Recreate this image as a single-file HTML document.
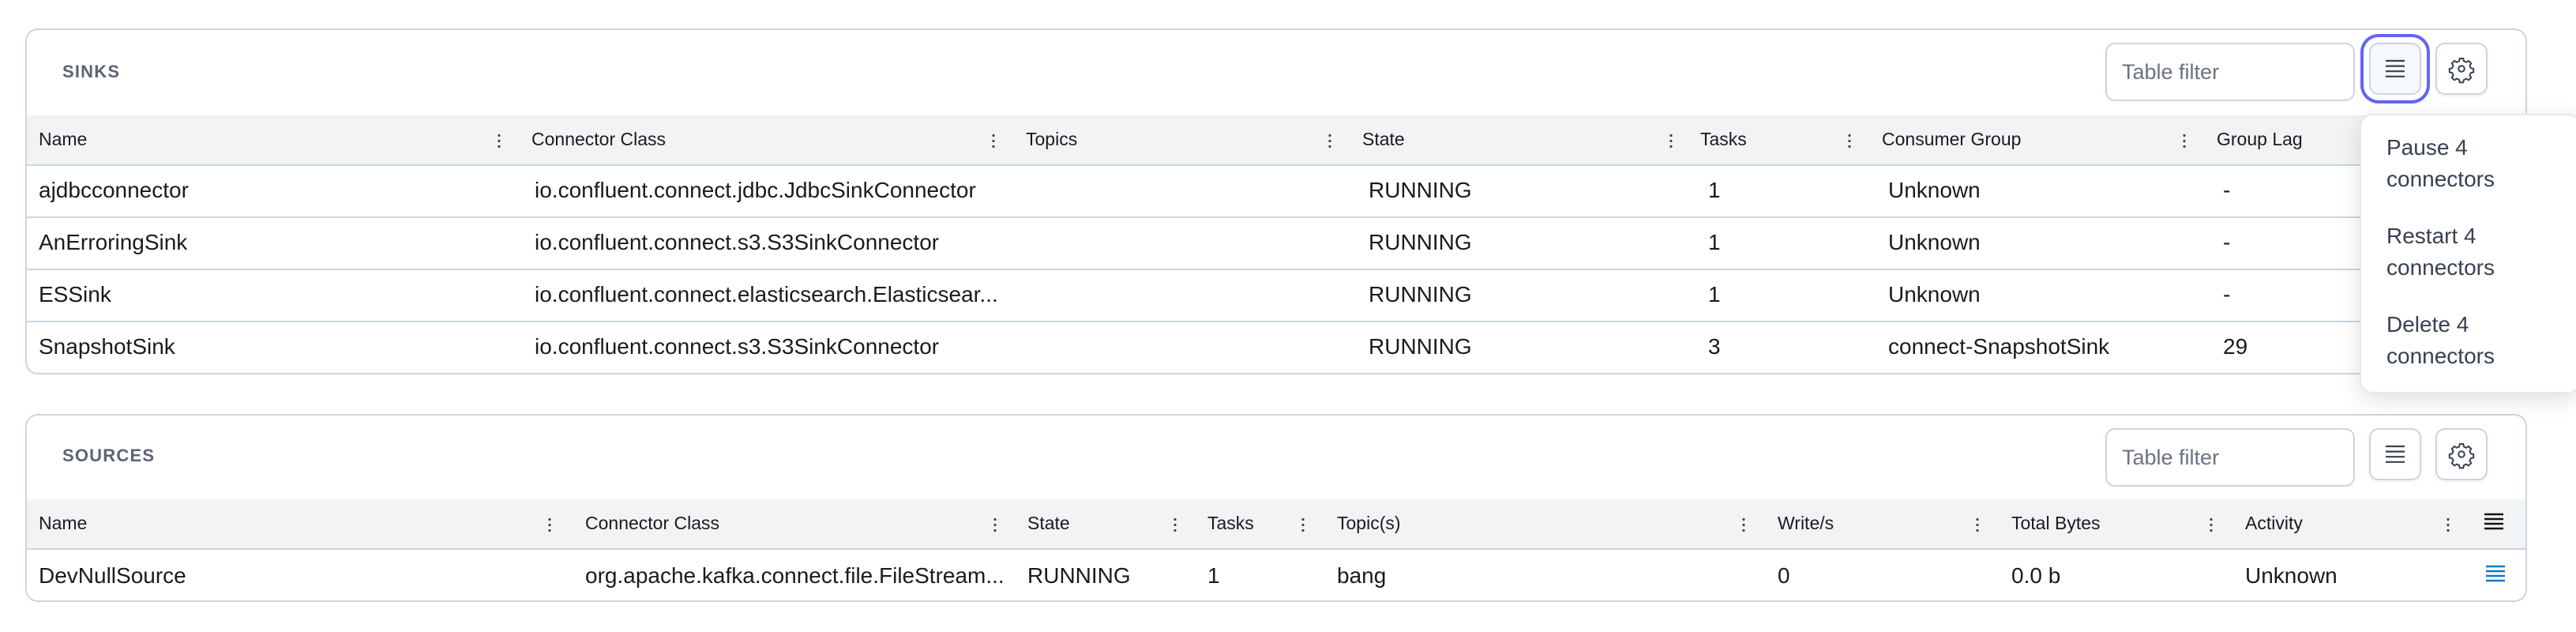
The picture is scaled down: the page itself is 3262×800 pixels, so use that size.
<!DOCTYPE html>
<html><head><meta charset="utf-8"><style>
*{box-sizing:border-box;margin:0;padding:0}
html,body{width:3262px;height:800px;overflow:hidden;background:#fff}
#w{position:absolute;left:0;top:0;width:1631px;height:400px;transform:scale(2);transform-origin:0 0;font-family:"Liberation Sans",sans-serif;color:#1b1b1f}
.p{position:absolute;left:15.5px;width:1584px;border:1px solid #cbd5e1;border-radius:8px;background:#fff}
.ttl{position:absolute;left:23px;font-size:11px;letter-spacing:.6px;color:#5b6472;font-weight:bold}
.f{position:absolute;left:1316px;width:158px;height:37px;border:1px solid #cbd5e1;border-radius:6px;font-size:13.5px;color:#6b7280;padding:10px 0 0 10px}
.b{position:absolute;width:33px;height:33px;border:1px solid #cbd5e1;border-radius:6px;background:#fff;box-shadow:0 1px 2px rgba(0,0,0,.06)}
.hd{position:absolute;left:0;right:0;background:#f2f3f5;border-bottom:1.5px solid #cbd5e1}
.rw{position:absolute;left:0;right:0;height:33px;border-bottom:1.5px solid #cbd5e1}
.t{position:absolute;white-space:nowrap}
.hd .t{font-size:11.5px;top:10px}
.rw .t{font-size:14px;top:7.5px}
.d{position:absolute;top:11px;width:2px;height:10px;background:radial-gradient(circle,#444 0.8px,transparent 0.9px) 0 0/2px 3.5px repeat-y}
.m{position:absolute;left:1494px;top:72px;width:140px;height:177px;background:#fff;border:1px solid #e6e8ec;border-radius:8px;box-shadow:0 4px 14px rgba(0,0,0,.12)}
.m div{position:absolute;left:16px;font-size:14px;line-height:20px;color:#374151}
</style></head><body><div id="w">

<div class="p" style="top:17.5px;height:219px">
 <div class="ttl" style="top:21px">SINKS</div>
 <div class="f" style="top:8.5px">Table filter</div>
 <div class="b" style="left:1483px;top:8.5px;background:#f7f8fa;box-shadow:0 0 0 3.5px #fff,0 0 0 5.5px #6366f1"><svg width="31" height="31" viewBox="0 0 31 31"><path d="M9.5 10.5h12M9.5 13.8h12M9.5 17.1h12M9.5 20.4h12" stroke="#374151" stroke-width="1.1"/></svg></div>
 <div class="b" style="left:1525px;top:8.5px"><svg width="31" height="31" viewBox="0 0 31 31"><g transform="translate(15.5 15.5)" fill="none" stroke="#374151" stroke-width="1"><circle r="1.9"/><path d="M-1.1 -6.5h2.2l.4 1.7 1.5.7 1.5-.9 1.6 1.6-.9 1.5.7 1.5 1.7.4v2.2l-1.7.4-.7 1.5.9 1.5-1.6 1.6-1.5-.9-1.5.7-.4 1.7h-2.2l-.4-1.7-1.5-.7-1.5.9-1.6-1.6.9-1.5-.7-1.5-1.7-.4v-2.2l1.7-.4.7-1.5-.9-1.5 1.6-1.6 1.5.9 1.5-.7z"/></g></svg></div>
 <div class="hd" style="top:54px;height:32px">
  <span class="t" style="left:8px">Name</span><span class="d" style="left:298px"></span>
  <span class="t" style="left:320px">Connector Class</span><span class="d" style="left:611px"></span>
  <span class="t" style="left:633px">Topics</span><span class="d" style="left:824px"></span>
  <span class="t" style="left:846px">State</span><span class="d" style="left:1040px"></span>
  <span class="t" style="left:1060px">Tasks</span><span class="d" style="left:1153px"></span>
  <span class="t" style="left:1175px">Consumer Group</span><span class="d" style="left:1365px"></span>
  <span class="t" style="left:1387px">Group Lag</span>
 </div>
 <div class="rw" style="top:86px"><span class="t" style="left:8px">ajdbcconnector</span><span class="t" style="left:322px">io.confluent.connect.jdbc.JdbcSinkConnector</span><span class="t" style="left:850px">RUNNING</span><span class="t" style="left:1065px">1</span><span class="t" style="left:1179px">Unknown</span><span class="t" style="left:1391px">-</span></div>
 <div class="rw" style="top:119px"><span class="t" style="left:8px">AnErroringSink</span><span class="t" style="left:322px">io.confluent.connect.s3.S3SinkConnector</span><span class="t" style="left:850px">RUNNING</span><span class="t" style="left:1065px">1</span><span class="t" style="left:1179px">Unknown</span><span class="t" style="left:1391px">-</span></div>
 <div class="rw" style="top:152px"><span class="t" style="left:8px">ESSink</span><span class="t" style="left:322px">io.confluent.connect.elasticsearch.Elasticsear...</span><span class="t" style="left:850px">RUNNING</span><span class="t" style="left:1065px">1</span><span class="t" style="left:1179px">Unknown</span><span class="t" style="left:1391px">-</span></div>
 <div class="rw" style="top:185px;border-bottom:none"><span class="t" style="left:8px">SnapshotSink</span><span class="t" style="left:322px">io.confluent.connect.s3.S3SinkConnector</span><span class="t" style="left:850px">RUNNING</span><span class="t" style="left:1065px">3</span><span class="t" style="left:1179px">connect-SnapshotSink</span><span class="t" style="left:1391px">29</span></div>
</div>

<div class="p" style="top:261.5px;height:119px">
 <div class="ttl" style="top:20px">SOURCES</div>
 <div class="f" style="top:8px">Table filter</div>
 <div class="b" style="left:1483px;top:8px"><svg width="31" height="31" viewBox="0 0 31 31"><path d="M9.5 10.5h12M9.5 13.8h12M9.5 17.1h12M9.5 20.4h12" stroke="#374151" stroke-width="1.1"/></svg></div>
 <div class="b" style="left:1525px;top:8px"><svg width="31" height="31" viewBox="0 0 31 31"><g transform="translate(15.5 15.5)" fill="none" stroke="#374151" stroke-width="1"><circle r="1.9"/><path d="M-1.1 -6.5h2.2l.4 1.7 1.5.7 1.5-.9 1.6 1.6-.9 1.5.7 1.5 1.7.4v2.2l-1.7.4-.7 1.5.9 1.5-1.6 1.6-1.5-.9-1.5.7-.4 1.7h-2.2l-.4-1.7-1.5-.7-1.5.9-1.6-1.6.9-1.5-.7-1.5-1.7-.4v-2.2l1.7-.4.7-1.5-.9-1.5 1.6-1.6 1.5.9 1.5-.7z"/></g></svg></div>
 <div class="hd" style="top:53.5px;height:32px">
  <span class="t" style="left:8px">Name</span><span class="d" style="left:330px"></span>
  <span class="t" style="left:354px">Connector Class</span><span class="d" style="left:612px"></span>
  <span class="t" style="left:634px">State</span><span class="d" style="left:726px"></span>
  <span class="t" style="left:748px">Tasks</span><span class="d" style="left:807px"></span>
  <span class="t" style="left:830px">Topic(s)</span><span class="d" style="left:1086px"></span>
  <span class="t" style="left:1109px">Write/s</span><span class="d" style="left:1234px"></span>
  <span class="t" style="left:1257px">Total Bytes</span><span class="d" style="left:1382px"></span>
  <span class="t" style="left:1405px">Activity</span><span class="d" style="left:1532px"></span>
  <svg class="t" style="left:1555px;top:8px" width="14" height="12" viewBox="0 0 14 12"><path d="M1 1.5h12M1 4.5h12M1 7.5h12M1 10.5h12" stroke="#111" stroke-width="1.2"/></svg>
 </div>
 <div class="rw" style="top:85.5px;border-bottom:none"><span class="t" style="left:8px">DevNullSource</span><span class="t" style="left:354px">org.apache.kafka.connect.file.FileStream...</span><span class="t" style="left:634px">RUNNING</span><span class="t" style="left:748px">1</span><span class="t" style="left:830px">bang</span><span class="t" style="left:1109px">0</span><span class="t" style="left:1257px">0.0 b</span><span class="t" style="left:1405px">Unknown</span>
  <svg class="t" style="left:1556px;top:9px" width="14" height="12" viewBox="0 0 14 12"><path d="M1 1.5h12M1 4.5h12M1 7.5h12M1 10.5h12" stroke="#0a7cc9" stroke-width="1.2"/></svg></div>
</div>

<div class="m">
 <div style="top:10px">Pause 4<br>connectors</div>
 <div style="top:66px">Restart 4<br>connectors</div>
 <div style="top:122px">Delete 4<br>connectors</div>
</div>
</div></body></html>
